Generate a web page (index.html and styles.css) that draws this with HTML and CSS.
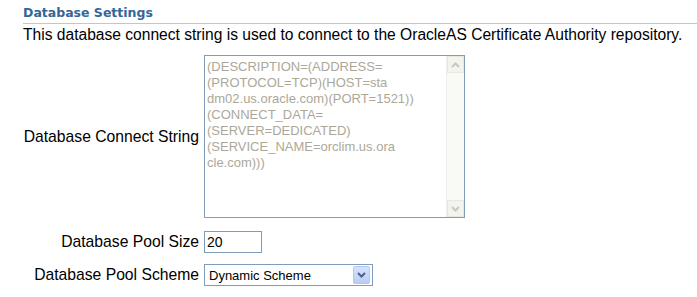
FILE: index.html
```html
<!DOCTYPE html>
<html lang="en">
<head>
  <meta charset="UTF-8" />
  <title>Database Settings</title>
  <link rel="stylesheet" href="styles.css">
</head>
<body>
  <div class="section">
    <h2 class="section-title">Database Settings</h2>
    <p class="section-desc">This database connect string is used to connect to the OracleAS Certificate Authority repository.</p>
    <table class="form">
      <tr>
        <td class="label">Database Connect String</td>
        <td class="field">
          <div class="textarea">
            <div class="textarea-text">(DESCRIPTION=(ADDRESS=<br>(PROTOCOL=TCP)(HOST=sta<br>dm02.us.oracle.com)(PORT=1521))<br>(CONNECT_DATA=<br>(SERVER=DEDICATED)<br>(SERVICE_NAME=orclim.us.ora<br>cle.com)))</div>
            <div class="scrollbar">
              <div class="scroll-btn">
                <svg width="9" height="6" viewBox="0 0 9 6"><path d="M1 5 L4.5 1.5 L8 5" fill="none" stroke="#c8c8c0" stroke-width="2"/></svg>
              </div>
              <div class="scroll-track"></div>
              <div class="scroll-btn">
                <svg width="9" height="6" viewBox="0 0 9 6"><path d="M1 1 L4.5 4.5 L8 1" fill="none" stroke="#c8c8c0" stroke-width="2"/></svg>
              </div>
            </div>
          </div>
        </td>
      </tr>
      <tr>
        <td class="label">Database Pool Size</td>
        <td class="field"><div class="input">20</div></td>
      </tr>
      <tr>
        <td class="label">Database Pool Scheme</td>
        <td class="field">
          <div class="select">
            <span class="select-value">Dynamic Scheme</span>
            <span class="select-btn">
              <svg width="9" height="6" viewBox="0 0 9 6"><path d="M1 1 L4.5 4.5 L8 1" fill="none" stroke="#4d6185" stroke-width="2"/></svg>
            </span>
          </div>
        </td>
      </tr>
    </table>
  </div>
</body>
</html>
```

FILE: styles.css
```css
body {
  margin: 0;
  font-family: "Liberation Sans", Arial, sans-serif;
  color: black;
  background: white;
}

.section {
  padding: 5px 0 0 23px;
}

.section-title {
  margin: 0;
  font-family: "DejaVu Sans", Verdana, sans-serif;
  font-size: 12.5px;
  line-height: 16px;
  font-weight: bold;
  color: #336699;
  padding-bottom: 2px;
  border-bottom: 1px solid #cccc99;
}

.section-desc {
  margin: 2px 0 0 0;
  font-size: 15.6px;
  line-height: 18px;
}

.form {
  border-collapse: collapse;
  margin-top: 11px;
}

.form td {
  padding: 0 0 11px 0;
  vertical-align: middle;
}

.form tr:first-child td {
  padding-bottom: 13px;
}

.label {
  width: 176px;
  text-align: right;
  white-space: nowrap;
  font-size: 15.7px;
  padding-right: 5px !important;
}

.textarea {
  display: flex;
  width: 259px;
  height: 161px;
  border: 1px solid #7f9db9;
  background: white;
}

.textarea-text {
  flex: 1;
  padding: 3px 2px;
  font-size: 13px;
  line-height: 16px;
  color: #aca899;
}

.scrollbar {
  width: 17px;
  display: flex;
  flex-direction: column;
  background: #f9f9f6;
  border-left: 1px solid #f0f0ea;
}

.scroll-btn {
  height: 17px;
  display: flex;
  align-items: center;
  justify-content: center;
  background: #f4f4ef;
  border: 1px solid #e8e8df;
  box-sizing: border-box;
}

.scroll-track {
  flex: 1;
}

.input {
  width: 54px;
  height: 20px;
  border: 1px solid #7f9db9;
  font-size: 14px;
  line-height: 20px;
  padding-left: 2px;
}

.select {
  display: flex;
  align-items: center;
  width: 167px;
  height: 20px;
  border: 1px solid #7f9db9;
  font-size: 13px;
}

.select-value {
  flex: 1;
  padding-left: 4px;
}

.select-btn {
  width: 15px;
  height: 16px;
  margin-right: 2px;
  display: flex;
  align-items: center;
  justify-content: center;
  background: linear-gradient(#d6e3fc, #b8cdf6);
  border: 1px solid #b3c8f3;
  border-radius: 2px;
}
```
